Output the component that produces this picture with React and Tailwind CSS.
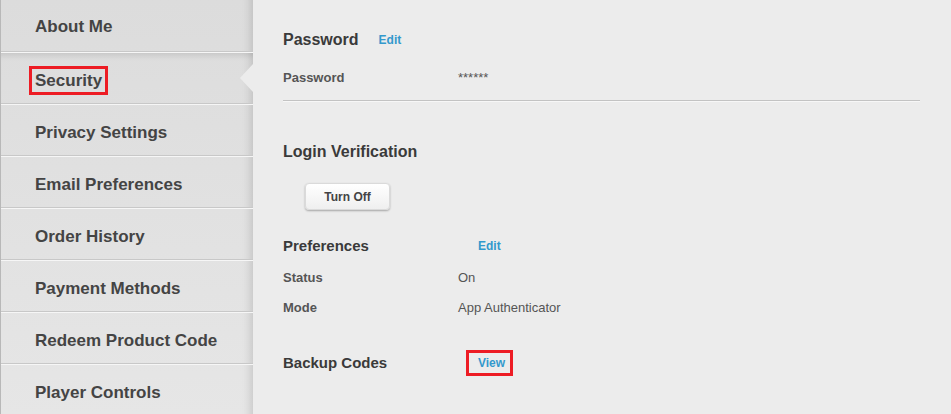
const menu = [
  'About Me',
  'Security',
  'Privacy Settings',
  'Email Preferences',
  'Order History',
  'Payment Methods',
  'Redeem Product Code',
  'Player Controls',
];

function SideItem({ label, active, first }) {
  return (
    <div
      className={`relative h-[52px] flex items-center pl-[34px] border-b border-[#c8c8c8] ${
        first ? 'pt-[3px]' : 'pt-[5px] border-t border-t-[#f6f6f6]'
      } ${
        active
          ? 'shadow-[inset_0_7px_6px_-5px_rgba(0,0,0,0.12),inset_-12px_0_10px_-10px_rgba(0,0,0,0.15)]'
          : 'shadow-[inset_-12px_0_10px_-10px_rgba(0,0,0,0.15)]'
      }`}
    >
      {active ? (
        <span className="ml-[-6px] inline-block border-[3px] border-[#ed1c24] px-[3px] leading-[23px] text-[17px] font-bold text-[#444]">
          {label}
        </span>
      ) : (
        <span className="text-[17px] font-bold text-[#444]">{label}</span>
      )}
      {active && (
        <span className="absolute right-0 top-1/2 -translate-y-1/2 w-0 h-0 border-y-[14px] border-y-transparent border-r-[13px] border-r-[#ececec]" />
      )}
    </div>
  );
}

function Row({ label, value }) {
  return (
    <div className="flex items-center h-[18px]">
      <div className="w-[175px] text-[13px] font-semibold text-[#555]">{label}</div>
      <div className="text-[13px] text-[#555]">{value}</div>
    </div>
  );
}

export default function App() {
  return (
    <div
      className="w-[951px] h-[414px] flex bg-[#ececec] overflow-hidden"
      style={{ fontFamily: '"Liberation Sans", Arial, sans-serif' }}
    >
      {/* Sidebar */}
      <div className="w-[253px] shrink-0 border-l border-[#b8b8b8] bg-gradient-to-b from-[#dcdcdc] to-[#e6e6e6]">
        {menu.map((m, i) => (
          <SideItem key={m} label={m} active={m === 'Security'} first={i === 0} />
        ))}
      </div>

      {/* Content */}
      <div className="flex-1 pl-[30px] pr-[31px] pt-[30px] text-[#3a3a3a]">
        <div className="flex items-center h-[20px]">
          <h2 className="text-[16px] font-bold">Password</h2>
          <a className="ml-[20px] text-[12px] font-bold text-[#3399cc]">Edit</a>
        </div>
        <div className="mt-[19px]">
          <Row label="Password" value="******" />
        </div>
        <div className="mt-[13px] border-t border-[#c3c3c3] border-b border-b-[#f7f7f7]" />

        <h2 className="mt-[40px] h-[20px] leading-[20px] text-[16px] font-bold">Login Verification</h2>
        <button className="mt-[21px] ml-[22px] w-[85px] h-[27px] rounded-[4px] border border-[#dadada] bg-gradient-to-b from-white to-[#efefef] shadow-[0_1px_2px_rgba(0,0,0,0.3)] text-[12px] font-semibold text-[#444]">
          Turn Off
        </button>

        <div className="mt-[26px] flex items-center h-[20px]">
          <h3 className="w-[195px] text-[15px] font-bold">Preferences</h3>
          <a className="text-[12px] font-bold text-[#3399cc]">Edit</a>
        </div>
        <div className="mt-[13px] flex flex-col gap-[12px]">
          <Row label="Status" value="On" />
          <Row label="Mode" value="App Authenticator" />
        </div>

        <div className="mt-[36px] flex items-center h-[20px]">
          <h3 className="w-[183px] text-[15px] font-bold">Backup Codes</h3>
          <a className="inline-block border-[3px] border-[#ed1c24] pl-[9px] pr-[5px] leading-[20px] text-[12px] font-bold text-[#3399cc]">
            View
          </a>
        </div>
      </div>
    </div>
  );
}
